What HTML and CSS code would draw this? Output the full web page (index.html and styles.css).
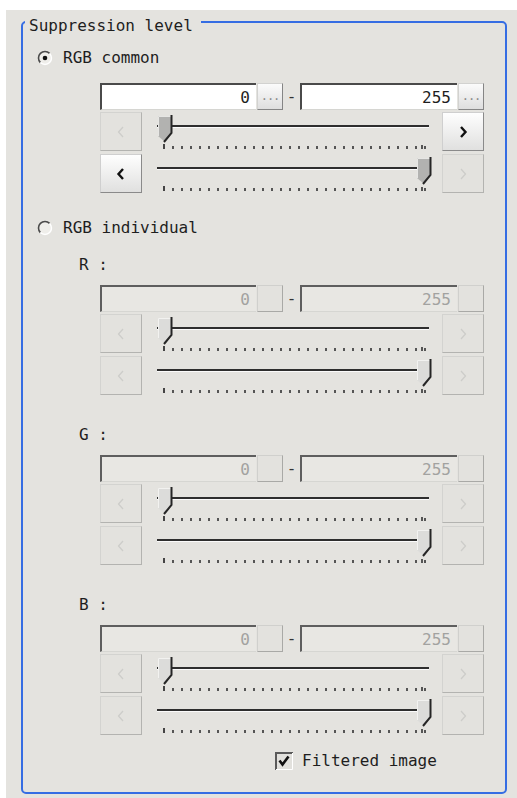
FILE: index.html
```html
<!DOCTYPE html>
<html lang="en">
<head>
<meta charset="utf-8">
<title>Suppression level</title>
<link rel="stylesheet" href="styles.css">
</head>
<body>
<div class="panel">
  <fieldset class="frame">
    <legend>Suppression level</legend>
    <div class="content">
      <div class="radio-row first">
        <svg class="radio" width="16" height="16" viewBox="0 0 16 16"><circle cx="8" cy="8" r="6.5" fill="#efeeea"/><path d="M3.4 12.6A6.5 6.5 0 0 1 12.6 3.4" fill="none" stroke="#4a4a4a" stroke-width="1.6"/><path d="M12.6 3.4A6.5 6.5 0 0 1 3.4 12.6" fill="none" stroke="#ffffff" stroke-width="1.4"/><circle cx="8" cy="8" r="2.3" fill="#111"/></svg>
        <span>RGB common</span>
      </div>

      <div class="group first-group">
        <div class="range-row">
          <div class="field"><span>0</span></div>
          <div class="dots-btn">...</div>
          <span class="dash">-</span>
          <div class="field wide"><span>255</span></div>
          <div class="dots-btn">...</div>
        </div>
        <div class="slider-row">
          <div class="btn off"><svg class="chev" viewBox="0 0 10 14"><polyline points="7,2 2.5,7 7,12"/></svg></div>
          <div class="slider"><div class="track"></div><div class="ticks"></div><svg class="thumb min" width="16" height="28" viewBox="0 0 16 28"><path class="t-body" d="M1 1H14.5V18L7.5 26.5L1 21Z"/><path class="t-hi" d="M1.5 21V1.5H14"/><path class="t-edge" d="M14.5 0V18L7 27"/></svg></div>
          <div class="btn"><svg class="chev" viewBox="0 0 10 14"><polyline points="3,2 7.5,7 3,12"/></svg></div>
        </div>
        <div class="slider-row second">
          <div class="btn"><svg class="chev" viewBox="0 0 10 14"><polyline points="7,2 2.5,7 7,12"/></svg></div>
          <div class="slider"><div class="track"></div><div class="ticks"></div><svg class="thumb max" width="16" height="28" viewBox="0 0 16 28"><path class="t-body" d="M1 1H14.5V18L7.5 26.5L1 21Z"/><path class="t-hi" d="M1.5 21V1.5H14"/><path class="t-edge" d="M14.5 0V18L7 27"/></svg></div>
          <div class="btn off"><svg class="chev" viewBox="0 0 10 14"><polyline points="3,2 7.5,7 3,12"/></svg></div>
        </div>
      </div>

      <div class="radio-row individual">
        <svg class="radio" width="16" height="16" viewBox="0 0 16 16"><circle cx="8" cy="8" r="6.5" fill="#efeeea"/><path d="M3.4 12.6A6.5 6.5 0 0 1 12.6 3.4" fill="none" stroke="#4a4a4a" stroke-width="1.6"/><path d="M12.6 3.4A6.5 6.5 0 0 1 3.4 12.6" fill="none" stroke="#ffffff" stroke-width="1.4"/></svg>
        <span>RGB individual</span>
      </div>

      <div class="channel first-channel">R :</div>
      <div class="group off">
        <div class="range-row">
          <div class="field"><span>0</span></div>
          <div class="dots-btn"></div>
          <span class="dash">-</span>
          <div class="field wide"><span>255</span></div>
          <div class="dots-btn"></div>
        </div>
        <div class="slider-row">
          <div class="btn off"><svg class="chev" viewBox="0 0 10 14"><polyline points="7,2 2.5,7 7,12"/></svg></div>
          <div class="slider"><div class="track"></div><div class="ticks"></div><svg class="thumb min" width="16" height="28" viewBox="0 0 16 28"><path class="t-body" d="M1 1H14.5V18L7.5 26.5L1 21Z"/><path class="t-hi" d="M1.5 21V1.5H14"/><path class="t-edge" d="M14.5 0V18L7 27"/></svg></div>
          <div class="btn off"><svg class="chev" viewBox="0 0 10 14"><polyline points="3,2 7.5,7 3,12"/></svg></div>
        </div>
        <div class="slider-row second">
          <div class="btn off"><svg class="chev" viewBox="0 0 10 14"><polyline points="7,2 2.5,7 7,12"/></svg></div>
          <div class="slider"><div class="track"></div><div class="ticks"></div><svg class="thumb max" width="16" height="28" viewBox="0 0 16 28"><path class="t-body" d="M1 1H14.5V18L7.5 26.5L1 21Z"/><path class="t-hi" d="M1.5 21V1.5H14"/><path class="t-edge" d="M14.5 0V18L7 27"/></svg></div>
          <div class="btn off"><svg class="chev" viewBox="0 0 10 14"><polyline points="3,2 7.5,7 3,12"/></svg></div>
        </div>
      </div>

      <div class="channel">G :</div>
      <div class="group off">
        <div class="range-row">
          <div class="field"><span>0</span></div>
          <div class="dots-btn"></div>
          <span class="dash">-</span>
          <div class="field wide"><span>255</span></div>
          <div class="dots-btn"></div>
        </div>
        <div class="slider-row">
          <div class="btn off"><svg class="chev" viewBox="0 0 10 14"><polyline points="7,2 2.5,7 7,12"/></svg></div>
          <div class="slider"><div class="track"></div><div class="ticks"></div><svg class="thumb min" width="16" height="28" viewBox="0 0 16 28"><path class="t-body" d="M1 1H14.5V18L7.5 26.5L1 21Z"/><path class="t-hi" d="M1.5 21V1.5H14"/><path class="t-edge" d="M14.5 0V18L7 27"/></svg></div>
          <div class="btn off"><svg class="chev" viewBox="0 0 10 14"><polyline points="3,2 7.5,7 3,12"/></svg></div>
        </div>
        <div class="slider-row second">
          <div class="btn off"><svg class="chev" viewBox="0 0 10 14"><polyline points="7,2 2.5,7 7,12"/></svg></div>
          <div class="slider"><div class="track"></div><div class="ticks"></div><svg class="thumb max" width="16" height="28" viewBox="0 0 16 28"><path class="t-body" d="M1 1H14.5V18L7.5 26.5L1 21Z"/><path class="t-hi" d="M1.5 21V1.5H14"/><path class="t-edge" d="M14.5 0V18L7 27"/></svg></div>
          <div class="btn off"><svg class="chev" viewBox="0 0 10 14"><polyline points="3,2 7.5,7 3,12"/></svg></div>
        </div>
      </div>

      <div class="channel">B :</div>
      <div class="group off">
        <div class="range-row">
          <div class="field"><span>0</span></div>
          <div class="dots-btn"></div>
          <span class="dash">-</span>
          <div class="field wide"><span>255</span></div>
          <div class="dots-btn"></div>
        </div>
        <div class="slider-row">
          <div class="btn off"><svg class="chev" viewBox="0 0 10 14"><polyline points="7,2 2.5,7 7,12"/></svg></div>
          <div class="slider"><div class="track"></div><div class="ticks"></div><svg class="thumb min" width="16" height="28" viewBox="0 0 16 28"><path class="t-body" d="M1 1H14.5V18L7.5 26.5L1 21Z"/><path class="t-hi" d="M1.5 21V1.5H14"/><path class="t-edge" d="M14.5 0V18L7 27"/></svg></div>
          <div class="btn off"><svg class="chev" viewBox="0 0 10 14"><polyline points="3,2 7.5,7 3,12"/></svg></div>
        </div>
        <div class="slider-row second">
          <div class="btn off"><svg class="chev" viewBox="0 0 10 14"><polyline points="7,2 2.5,7 7,12"/></svg></div>
          <div class="slider"><div class="track"></div><div class="ticks"></div><svg class="thumb max" width="16" height="28" viewBox="0 0 16 28"><path class="t-body" d="M1 1H14.5V18L7.5 26.5L1 21Z"/><path class="t-hi" d="M1.5 21V1.5H14"/><path class="t-edge" d="M14.5 0V18L7 27"/></svg></div>
          <div class="btn off"><svg class="chev" viewBox="0 0 10 14"><polyline points="3,2 7.5,7 3,12"/></svg></div>
        </div>
      </div>

      <div class="check-row">
        <svg class="checkbox" width="18" height="18" viewBox="0 0 18 18"><rect width="18" height="18" fill="#e2e1dd"/><path d="M1 18V1H18" fill="none" stroke="#5a5a5a" stroke-width="2"/><path d="M1 17.5H17.5V1" fill="none" stroke="#ffffff" stroke-width="1"/><polyline points="4.5,8.5 7.5,12.5 13.5,4.5" fill="none" stroke="#111" stroke-width="2.6"/></svg>
        <span>Filtered image</span>
      </div>
    </div>
  </fieldset>
</div>
</body>
</html>
```
FILE: styles.css
```css
* { box-sizing: border-box; }

html, body {
  margin: 0;
  background: #ffffff;
}

body {
  padding: 10px 0 0 6px;
  font-family: "DejaVu Sans Mono", "Liberation Mono", monospace;
  font-size: 16px;
  color: #1e1e1e;
}

.panel {
  height: 788px;
  background: #e4e3df;
  overflow: hidden;
}

.frame {
  margin: 0 0 0 15px;
  width: 486px;
  min-width: 0;
  padding: 0 0 22px 0;
  border: 2px solid #356de3;
  border-radius: 5px;
}

.frame legend {
  margin-left: 2px;
  padding: 8px 8px 0 4px;
  line-height: 16px;
}

.content {
  display: flex;
  flex-direction: column;
  align-items: flex-start;
}

.radio-row {
  display: flex;
  align-items: center;
  gap: 10px;
  height: 20px;
  line-height: 20px;
  margin-left: 14px;
}
.radio-row.first { margin-top: 14px; }
.radio-row.individual { margin-top: 25px; }
.radio { display: block; flex: none; }

.group {
  margin-left: 77px;
  margin-top: 15px;
  display: flex;
  flex-direction: column;
}
.group.off { margin-top: 10px; }

.channel {
  margin-left: 56px;
  margin-top: 30px;
  height: 20px;
  line-height: 20px;
}
.channel.first-channel { margin-top: 17px; }

/* value range row */
.range-row {
  display: flex;
  height: 27px;
}
.field {
  width: 156px;
  background: #ffffff;
  border-top: 2px solid #4a4a4a;
  border-left: 2px solid #4a4a4a;
  border-bottom: 1px solid #d6d6d2;
  display: flex;
  align-items: center;
  justify-content: flex-end;
  padding-right: 6px;
  color: #1e1e1e;
}
.field.wide { width: 157px; }
.dots-btn {
  width: 26px;
  margin-left: 1px;
  border: 1px solid;
  border-color: #d2d2d0 #858585 #858585 #d2d2d0;
  background: linear-gradient(#fbfbfb, #dedede);
  color: #8c8c8c;
  font-size: 12px;
  line-height: 24px;
  text-align: center;
  letter-spacing: -1px;
}
.dash {
  width: 17px;
  text-align: center;
  line-height: 27px;
  color: #333;
}

.off .field {
  background: #e8e7e3;
  border-top-color: #5e5e5e;
  border-left-color: #5e5e5e;
  color: #a2a2a0;
}
.off .dots-btn {
  background: #e3e2de;
  border-color: #d0d0cd #a9a9a6 #a9a9a6 #d0d0cd;
}

/* slider rows */
.slider-row {
  display: flex;
  height: 39px;
  margin-top: 2px;
}
.slider-row.second { margin-top: 3px; }

.btn {
  width: 42px;
  flex: none;
  border: 1px solid;
  border-color: #cfcfcf #8a8a8a #8a8a8a #cfcfcf;
  background: linear-gradient(#fefefe, #e0e0df);
  display: flex;
  align-items: center;
  justify-content: center;
}
.btn .chev {
  width: 10px;
  height: 14px;
  fill: none;
  stroke: #111;
  stroke-width: 2.4;
}
.btn.off {
  background: #e3e2de;
  border-color: #d3d3d0 #b3b3b0 #b3b3b0 #d3d3d0;
}
.btn.off .chev {
  stroke: #cdcdca;
  stroke-width: 1.3;
}

.slider {
  position: relative;
  flex: 1;
}
.track {
  margin: 13px 13px 0 15px;
  height: 3px;
  border-top: 2px solid #2e2e2e;
  border-bottom: 1px solid #fbfbfb;
}
.ticks {
  position: relative;
  margin: 18px 0 0 21px;
  width: 263px;
  height: 3px;
  background: repeating-linear-gradient(to right, #555 0 2px, transparent 2px 9px);
}
.ticks::before {
  content: "";
  position: absolute;
  left: 0;
  top: -2px;
  width: 2px;
  height: 5px;
  background: #444;
}
.ticks::after {
  content: "";
  position: absolute;
  left: 258px;
  top: -1px;
  width: 2px;
  height: 4px;
  background: #555;
}

.thumb {
  position: absolute;
  top: 3px;
  display: block;
}
.thumb.min { left: 15px; }
.thumb.max { left: 274px; }
.t-body { fill: #b2b2b0; }
.t-hi { fill: none; stroke: #e6e6e4; stroke-width: 1; }
.t-edge { fill: none; stroke: #262626; stroke-width: 2; }
.off .t-body { fill: #dcdcda; }
.off .t-hi { stroke: #f2f2f0; }

/* bottom checkbox */
.check-row {
  margin-top: 17px;
  margin-left: 252px;
  display: flex;
  align-items: center;
  gap: 9px;
  height: 18px;
  line-height: 18px;
}
.checkbox { display: block; flex: none; }
```
